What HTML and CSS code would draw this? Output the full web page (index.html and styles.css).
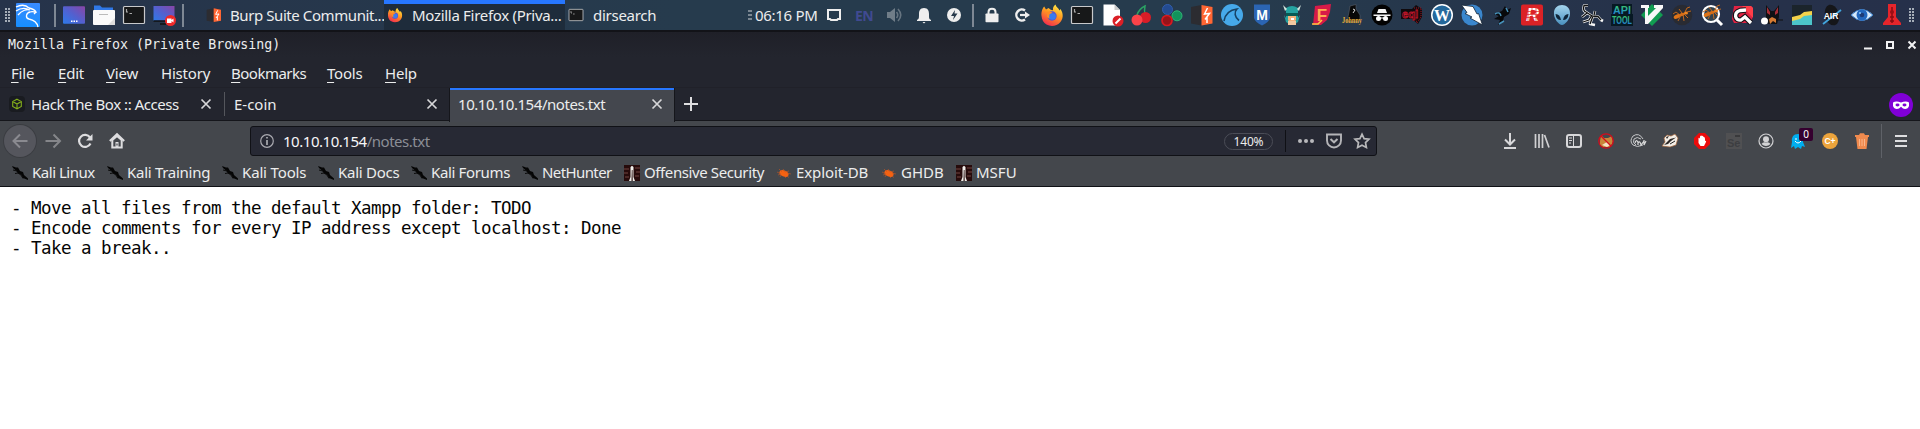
FILE: index.html
```
<!DOCTYPE html>
<html lang="en">
<head>
<meta charset="utf-8">
<title>Mozilla Firefox (Private Browsing)</title>
<link rel="stylesheet" href="styles.css">
</head>
<body>
<svg width="0" height="0" class="defs" aria-hidden="true">
  <defs>
    <linearGradient id="desk" x1="0" y1="1" x2="1" y2="0"><stop offset="0" stop-color="#2d7bea"/><stop offset=".5" stop-color="#5360cf"/><stop offset="1" stop-color="#8a45a5"/></linearGradient>
    <linearGradient id="fire" x1=".8" y1="0" x2=".3" y2="1"><stop offset="0" stop-color="#fff04a"/><stop offset=".45" stop-color="#ff9a20"/><stop offset="1" stop-color="#f32b4f"/></linearGradient>
    <linearGradient id="kali" x1="0" y1="0" x2="0" y2="1"><stop offset="0" stop-color="#3a8bff"/><stop offset="1" stop-color="#168eff"/></linearGradient>
    <linearGradient id="api" x1="0" y1="0" x2="0" y2="1"><stop offset="0" stop-color="#3fc45b"/><stop offset=".5" stop-color="#28a8a8"/><stop offset="1" stop-color="#2366e8"/></linearGradient>
    <linearGradient id="alien" x1="0" y1="0" x2="0" y2="1"><stop offset="0" stop-color="#a4d5ee"/><stop offset="1" stop-color="#4a91bf"/></linearGradient>
    <symbol id="firefox" viewBox="0 0 24 24">
      <path d="M1.500 13C1 8 3 4.800 4.200 3.500L6 6.500L8.500 5C10 6 10.500 7 13 7.200C12.500 4.500 14 2.500 15.500 1.500C16 4 18.500 5 19.500 7.500L20.500 6C24 11 23 16.500 20 19.500C17 23 11 24 6.500 21.500C3.500 19.800 1.800 16.500 1.500 13Z" fill="url(#fire)"/>
      <circle cx="12" cy="13" r="4.700" fill="#5b56c9"/><path d="M7 9.500C9 8 11 8.500 12.500 10L9.500 11.500C11 13 13 12.500 14.500 12C14 15.500 10 17 7 14Z" fill="#ff8a24"/><circle cx="12.500" cy="13.500" r="3.300" fill="#397bf0"/>
    </symbol>
    <symbol id="term" viewBox="0 0 24 24"><rect x="1.500" y="3.500" width="21" height="17" rx="1" fill="#171819" stroke="#c8c9cb" stroke-width="1.200"/><path d="M4.500 6v3h1.500M7.500 10.500H10" stroke="#aaa" fill="none" stroke-width="1.200"/></symbol>
    <symbol id="burp" viewBox="0 0 24 24"><path d="M1 4L11.500 2V22.500L1 20.500Z" fill="#2c2c31"/><path d="M11.500 2L22.500 4V20.500L11.500 22.500Z" fill="#ff6633"/><path d="M17.500 5L14.500 11L19.500 10.500L15 16.500M17 14V20" fill="none" stroke="#fff" stroke-width="1.500"/></symbol>
    <symbol id="dragon" viewBox="0 0 16 16"><path d="M0 1L4 2.500L6 2.500L8 6L11 7L12 10L16 13.500V15L11 13L9 9.500L6 8.500L4 5.500L1 3Z" fill="#050505"/><path d="M1 5L5 6M3 8.500L6 8L9 10L11 13.500" stroke="#0b0b0b" fill="none"/></symbol>
    <symbol id="offsec" viewBox="0 0 16 16"><rect width="16" height="16" fill="#260b0b"/><path d="M0 4H5M0 8H4M1 12H5M11 3H16M12 7H16M11 11H15" stroke="#593331" stroke-width="1.300"/><path d="M5 16L6.500 12V2L8 .8L9.500 2V12L11 16H8.700L8.500 5H7.800L7.500 16Z" fill="#f1efeb"/></symbol>
    <symbol id="bug" viewBox="0 0 16 16"><ellipse cx="8" cy="8.500" rx="4.800" ry="3" transform="rotate(24 8 8.500)" fill="#f46212"/><path d="M1 7L5 9L2 10M3 4L6 7M7 4L9 7L13 6M5 10L4 12M8 11L10 13M11 11L13 12.500M11 8L15 9" stroke="#c75722" fill="none" stroke-width=".6"/></symbol>
    <symbol id="ant" viewBox="0 0 24 24"><ellipse cx="7" cy="13.500" rx="3.500" ry="2" fill="#df7418" transform="rotate(-25 7 13.500)"/><ellipse cx="12" cy="11.500" rx="3" ry="1.500" fill="#d56d17" transform="rotate(-20 12 11.500)"/><ellipse cx="16" cy="10" rx="2" ry="1.500" fill="#ef8521"/><path d="M10 12L6 9L3 11M11 12L8 18M13 11L14 18M14 11L18 15M15 9L17 5L20 4M17 9L21 8M12 10L9 6" fill="none" stroke="#d06d1b" stroke-width=".9"/></symbol>
    <symbol id="close" viewBox="0 0 12 12"><path d="M1.500 1.500L10.500 10.500M10.500 1.500L1.500 10.500" stroke="#d6d6d8" stroke-width="1.700"/></symbol>
  </defs>
</svg>

<header class="panel">
  <span class="grip"></span>
  <svg class="kali" viewBox="0 0 24 24"><rect width="24" height="24" rx="1" fill="url(#kali)"/><path d="M0 4C6 1 10 2 13 5M0 8C6 4 10 5 14 7M2 12C6 7 11 6 14 7M13 5C17 6 19 7 20 9C18 9 16 8 14 9C10 10 9 15 13 16C18 17 21 19 22 24M20 9L18 11" fill="none" stroke="#fff" stroke-width="1.300"/></svg>
  <i class="sep sep-first"></i>
  <div class="cell"><svg viewBox="0 0 24 24"><rect x="1" y="3.300" width="22" height="17.500" rx="1" fill="url(#desk)"/><path d="M9 18.200h1.500M11.500 18.200h1.500M14 18.200h1.500" stroke="#fff" stroke-width="1.600"/></svg></div>
  <div class="cell"><svg viewBox="0 0 24 24"><path d="M2 2.500H8L10 4.500H21V10H2Z" fill="#2f78e7"/><rect x="1" y="7" width="22" height="15" rx="1" fill="#fafafa"/><path d="M16 22L23 15V22Z" fill="#dcdcdc"/><path d="M7 11.500H16" stroke="#bbb"/></svg></div>
  <div class="cell"><svg><use href="#term"/></svg></div>
  <div class="cell"><svg viewBox="0 0 24 24"><rect x="1.500" y="3" width="21" height="15" fill="url(#desk)"/><path d="M1.500 18H22M8 21H14" stroke="#111" stroke-width="1.500"/><circle cx="18.500" cy="17.500" r="5.500" fill="#ef2929"/><path d="M15 15.500H19.500V17L21.500 15.500V19.500L19.500 18V20H15Z" fill="#fff"/></svg></div>
  <i class="sep"></i>
  <div class="task task-burp"><svg><use href="#burp"/></svg><span>Burp Suite Communit...</span></div>
  <div class="task task-active"><svg><use href="#firefox"/></svg><span>Mozilla Firefox (Priva...</span></div>
  <div class="task task-dir"><svg><use href="#term"/></svg><span>dirsearch</span></div>
  <div class="tray">
    <span class="minigrip"></span><span class="clock">06:16 PM</span>
    <div class="cell"><svg viewBox="0 0 24 24"><path d="M6 7H18V16H16L15 17H9L8 16H6Z" fill="none" stroke="#eee" stroke-width="2"/></svg></div>
    <div class="cell lang">EN</div>
    <div class="cell"><svg viewBox="0 0 24 24"><path d="M5 9H8L13 5V19L8 15H5Z" fill="#707d88"/><path d="M14.500 9Q17 12 14.500 15M16 6Q21.500 12 16 18" fill="none" stroke="#667480" stroke-width="1.600"/></svg></div>
    <div class="cell"><svg viewBox="0 0 24 24"><path d="M12 5C16 5 17 8 17 11C17 15 17 16 19 17V18H5V17C7 16 7 15 7 11C7 8 8 5 12 5ZM10.500 19H13.500L12 20.500Z" fill="#eee"/></svg></div>
    <div class="cell"><svg viewBox="0 0 24 24"><circle cx="12" cy="12" r="7" fill="#eee"/><path d="M13 7L9 13H12L11 17L15.500 10.500H12.500Z" fill="#26384a"/></svg></div>
    <i class="sep"></i>
    <div class="cell"><svg viewBox="0 0 24 24"><path d="M8.500 12V9C8.500 4.500 15.500 4.500 15.500 9V12" fill="none" stroke="#eee" stroke-width="2"/><rect x="5.500" y="10.500" width="13" height="8.800" rx=".8" fill="#eee"/></svg></div>
    <div class="cell"><svg viewBox="0 0 24 24"><path d="M15 7.500A5.500 5.500 0 1 0 15 16.500" fill="none" stroke="#eee" stroke-width="2.400"/><path d="M10 12H17" stroke="#eee" stroke-width="2.200"/><path d="M15 8.500L20 12L15 15.500Z" fill="#eee"/></svg></div>
    <div class="cell"><svg><use href="#firefox"/></svg></div>
    <div class="cell"><svg><use href="#term"/></svg></div>
    <div class="cell"><svg viewBox="0 0 24 24"><path d="M3.500 1.500H14.500L20 7V22.500H3.500Z" fill="#fff"/><path d="M14.500 1.500V7H20Z" fill="#ccc"/><circle cx="18" cy="18" r="5.500" fill="#db1f26"/><path d="M15.500 20.500L20.500 15.500" stroke="#fff" stroke-width="2"/></svg></div>
    <div class="cell"><svg viewBox="0 0 24 24"><path d="M7 12Q9 6 15 3Q14 8 15 11" fill="none" stroke="#2ba263" stroke-width="1.500"/><circle cx="15.500" cy="14.500" r="5.500" fill="#d91d27"/><circle cx="7" cy="17" r="5.500" fill="#fb4349"/></svg></div>
    <div class="cell"><svg viewBox="0 0 24 24"><circle cx="7.500" cy="6.500" r="5" fill="#234b91" stroke="#315dab"/><circle cx="17" cy="12.800" r="5" fill="#12935c" stroke="#30b477"/><circle cx="7" cy="17.500" r="5" fill="#971319" stroke="#d71920" stroke-width="1.700"/></svg></div>
    <div class="cell"><svg><use href="#burp"/></svg></div>
    <div class="cell"><svg viewBox="0 0 24 24"><circle cx="12" cy="12" r="11" fill="#46a9ea"/><path d="M4 18C5 12 9 7 17 6C14 9 14.500 14 19 17.500" fill="none" stroke="#174265" stroke-width="1.600"/></svg></div>
    <div class="cell"><svg viewBox="0 0 24 24"><path d="M4 1.500H20V15Q19 19 12 22.500Q5 19 4 15Z" fill="#2b65b3"/><text x="12" y="16.500" text-anchor="middle" class="glyph msf">M</text></svg></div>
    <div class="cell"><svg viewBox="0 0 24 24"><path d="M6 5Q12 1 18 5V15L20 12L18 19L15 21H9L6 19L4 12L6 15Z" fill="#25a3a1"/><path d="M7 6L3 2L5 8ZM17 6L21 2L19 8Z" fill="#d6e8df"/><path d="M8 13H16V17L14 20H10L8 17Z" fill="#f4b37c"/><path d="M6 10H18V13H6Z" fill="#075b55"/><path d="M8 18H16V22H8Z" fill="#f2c9a0"/><path d="M11 15H14V17H11Z" fill="#fff"/></svg></div>
    <div class="cell"><svg viewBox="0 0 24 24"><path d="M5 3L21 1L20 9L17 17L11 22H3Z" fill="#d71a48"/><path d="M2 21H8L12 17" stroke="#ffc940" stroke-width="1.500" fill="none"/><text x="12" y="18" text-anchor="middle" class="glyph fara">F</text></svg></div>
    <div class="cell"><svg viewBox="0 0 24 24"><path d="M10 3L16 1.500L16 6L20 12V18H7L9 9Z" fill="#080808" stroke="#59606b" stroke-width=".6"/><path d="M13 6L15 7L13 10" stroke="#ddd" fill="none"/><text x="12" y="20" text-anchor="middle" textLength="20" lengthAdjust="spacingAndGlyphs" class="glyph john">Johnny</text></svg></div>
    <div class="cell"><svg viewBox="0 0 24 24"><circle cx="12" cy="12" r="10.500" fill="#030303"/><path d="M3.500 11.500H20.500V13H3.500ZM7 10L8.500 6H15.500L17 10Z" fill="#f4f4f4"/><circle cx="8.500" cy="15.500" r="2.500" fill="#fff"/><circle cx="15.500" cy="15.500" r="2.500" fill="#fff"/><path d="M10 15H14" stroke="#fff"/></svg></div>
    <div class="cell"><svg viewBox="0 0 24 24"><path d="M1 6H12L16 2L22 6V14L18 21L12 16H1Z" fill="#100a0d"/><text x="10" y="14.500" text-anchor="middle" class="glyph eql">eql</text><path d="M14 5H21V14L17 20L15 14" stroke="#9d1422" stroke-dasharray="1 1" fill="none"/></svg></div>
    <div class="cell"><svg viewBox="0 0 24 24"><circle cx="12" cy="12" r="11" fill="#fff"/><circle cx="12" cy="12" r="9.500" fill="#24689b"/><text x="12" y="17.500" text-anchor="middle" class="glyph wp">W</text></svg></div>
    <div class="cell"><svg viewBox="0 0 24 24"><circle cx="12" cy="12" r="10.500" fill="#3a87ce"/><path d="M1.500 2L13 3.500L17 11L18.500 10.500L22.500 22L10 15L12 14L5 10.500L7 9.500Z" fill="#fff" stroke="#102131" stroke-width=".8"/></svg></div>
    <div class="cell"><svg viewBox="0 0 24 24"><path d="M4 11L12 8L15 3L17 7L21 5L19 11L14 14L13 18L8 22L10 17L4 16L9 13Z" fill="#08090b"/><path d="M5 11Q10 8 11 13M16 5L18 9M9 21L14 18" stroke="#4793bb" fill="none" stroke-width="1.500"/></svg></div>
    <div class="cell"><svg viewBox="0 0 24 24"><rect x="1" y="1.500" width="22" height="21" rx="2" fill="#db2226"/><text x="12.500" y="18" text-anchor="middle" class="glyph rr">R</text><path d="M3 8.500H21M3 11.500H21M3 14.500H21M8 4V20M12 4V20M16 4V20" stroke="#db2226" stroke-width=".7"/></svg></div>
    <div class="cell"><svg viewBox="0 0 24 24"><path d="M4 11C3 -1 21 -1 20 11C20 16 15 22 12 22C9 22 4 16 4 11Z" fill="url(#alien)"/><path d="M5.500 11Q10 11 11 17Q6 17 5.500 11ZM18.500 11Q14 11 13 17Q18 17 18.500 11Z" fill="#10263a"/></svg></div>
    <div class="cell"><svg viewBox="0 0 24 24"><g fill="none" stroke-linejoin="round"><path id="scorp" d="M8 2.500L4 2.500Q2.500 8 6 9L12 13L18 13.500L21 17L23 18M12 12L9 17L3 19M13 13L10 21L15 22M7 10L2 14M15 8L14 12" stroke="#f7f7f7" stroke-width="2.600"/><path d="M8 2.500L4 2.500Q2.500 8 6 9L12 13L18 13.500L21 17M12 12L9 17L3 19M13 13L10 21M7 10L2 14M15 8L14 12" stroke="#111" stroke-width="1.300"/></g></svg></div>
    <div class="cell"><svg viewBox="0 0 24 24"><path d="M2 1H22V11H23V23H1V11H2Z" fill="#071923"/><text x="12" y="10.500" text-anchor="middle" textLength="18" lengthAdjust="spacingAndGlyphs" class="glyph api">API</text><text x="12" y="21" text-anchor="middle" textLength="20" lengthAdjust="spacingAndGlyphs" class="glyph api">TOOL</text></svg></div>
    <div class="cell"><svg viewBox="0 0 24 24"><path d="M12 1L23 12L12 23L1 12Z" fill="#119c51"/><path d="M1 2H9V5H8V13L16 5H14V2H23V5L8 21H5V5H1Z" fill="#f8f8f8"/></svg></div>
    <div class="cell"><svg viewBox="0 0 24 24"><circle cx="12" cy="12" r="10.300" fill="#292b32"/><use href="#ant"/></svg></div>
    <div class="cell"><svg viewBox="0 0 24 24"><circle cx="11" cy="11" r="8" fill="#33434e" stroke="#fff" stroke-width="2.200"/><path d="M17 17L22 22" stroke="#fff" stroke-width="3"/><use href="#ant" y="-2"/></svg></div>
    <div class="cell"><svg viewBox="0 0 24 24"><path d="M4 3H21L23 5L22 18L17 20H4L2 16Z" fill="#df2343"/><path d="M12 3H21L23 5V15Z" fill="#ff3e49"/><path d="M16 7L10 7.500C3 10 5 18 11 17L15 14L21 20" fill="none" stroke="#151015" stroke-width="5.500"/><path d="M16 7L10 7.500C3 10 5 18 11 17L15 14L21 20" fill="none" stroke="#fff" stroke-width="3.300"/></svg></div>
    <div class="cell"><svg viewBox="0 0 24 24"><path d="M6 2L11 8H14L19 2V14L17 21H8L6 14Z" fill="#101114"/><path d="M7 4L10 9V12L7 10ZM18 4L15 9V12L18 10Z" fill="#a92d37"/><path d="M9 16L12 14L16 16V20L13 18L10 21Z" fill="#d57a32"/><path d="M18 17H23" stroke="#111"/><circle cx="4.500" cy="18" r="3.500" fill="#fff"/></svg></div>
    <div class="cell"><svg viewBox="0 0 24 24"><rect x="2" y="2" width="20" height="20" fill="#1b242b"/><path d="M2 14L10 12L14 9L22 8V13L12 17L2 20Z" fill="#f4d24a"/><path d="M2 18L10 16L14 13L22 12V22H2Z" fill="#4cc5ca"/></svg></div>
    <div class="cell"><svg viewBox="0 0 24 24"><ellipse cx="12" cy="12" rx="7" ry="10.500" transform="rotate(-15 12 12)" fill="#151619"/><path d="M3 21L21 7" stroke="#42a6de" stroke-width="1.800"/><text x="11" y="16" text-anchor="middle" class="glyph air">AIR</text></svg></div>
    <div class="cell"><svg viewBox="0 0 24 24"><path d="M1 12Q12 1 23 12Q12 23 1 12Z" fill="#d7e9fa" stroke="#377dc9"/><circle cx="12" cy="12" r="5.500" fill="#2367bd"/><circle cx="12" cy="12" r="2.300" fill="#1e3b75"/><circle cx="10" cy="10" r="1" fill="#8bc8fa"/></svg></div>
    <div class="cell"><svg viewBox="0 0 24 24"><path d="M8 1H16V14L21 20V22H3V20L8 14Z" fill="#e5252b"/><path d="M12 4V20M10 14H14M10 18H14" stroke="#8a0b12" stroke-width="1.500"/><circle cx="12" cy="9" r="2" fill="#9c0e15"/></svg></div>
    <span class="grip grip-end"></span>
  </div>
</header>

<div class="titlebar">
  <span class="title">Mozilla Firefox (Private Browsing)</span>
  <svg class="winbtns" viewBox="0 0 56 12"><path d="M2 9.500H10" stroke="#f2f2f3" stroke-width="2"/><rect x="25" y="3" width="6" height="6" fill="none" stroke="#f2f2f3" stroke-width="2"/><path d="M46.500 2.500L53.500 9.500M53.500 2.500L46.500 9.500" stroke="#f2f2f3" stroke-width="2"/></svg>
</div>

<nav class="menubar">
  <span class="m-file"><u>F</u>ile</span><span class="m-edit"><u>E</u>dit</span><span class="m-view"><u>V</u>iew</span><span class="m-hist">Hi<u>s</u>tory</span><span class="m-book"><u>B</u>ookmarks</span><span class="m-tool"><u>T</u>ools</span><span class="m-help"><u>H</u>elp</span>
</nav>

<div class="tabs">
  <div class="tab tab-htb">
    <svg class="fav" viewBox="0 0 16 16"><rect width="16" height="16" rx="4" fill="#191b20"/><path d="M8 3.200L12.300 5.500V10.500L8 12.800L3.700 10.500V5.500ZM3.700 5.500L8 8L12.300 5.500M8 8V12.500" fill="none" stroke="#83ad1b" stroke-width="1.100"/></svg>
    <span>Hack The Box :: Access</span><svg class="x"><use href="#close"/></svg>
  </div>
  <div class="tab tab-ecoin"><span>E-coin</span><svg class="x"><use href="#close"/></svg></div>
  <div class="tab tab-notes"><span>10.10.10.154/notes.txt</span><svg class="x"><use href="#close"/></svg></div>
  <svg class="plus" viewBox="0 0 14 14"><path d="M7 0V14M0 7H14" stroke="#dedee0" stroke-width="2"/></svg>
  <svg class="mask" viewBox="0 0 24 24"><circle cx="12" cy="12" r="12" fill="#8000d7"/><path d="M4 9.500Q7 7.500 12 9.500Q17 7.500 20 9.500V13Q19 16 16 16Q14 16 12 13.800Q10 16 8 16Q5 16 4 13Z" fill="#fff"/><ellipse cx="8.500" cy="12" rx="2" ry="1.400" fill="#8000d7"/><ellipse cx="15.500" cy="12" rx="2" ry="1.400" fill="#8000d7"/></svg>
</div>

<div class="toolbar">
  <div class="back"><svg viewBox="0 0 16 16"><path d="M15.500 8H1.500M8 1.500L1.500 8L8 14.500" fill="none" stroke="#8a8a90" stroke-width="2"/></svg></div>
  <svg class="i16 fwd" viewBox="0 0 16 16"><path d="M.5 8H14.500M8.500 1.500L15 8L8.500 14.500" fill="none" stroke="#85868a" stroke-width="2"/></svg>
  <svg class="i16 reload" viewBox="0 0 16 16"><path d="M13 4.500A6 6 0 1 0 13.500 10.500" fill="none" stroke="#dddddf" stroke-width="2.200"/><path d="M15.500 1V7.500H9Z" fill="#dddddf"/></svg>
  <svg class="i16 home" viewBox="0 0 16 16"><path d="M.8 8L8 1.200L15.200 8" fill="none" stroke="#dddddf" stroke-width="2"/><path d="M3.300 7V14.500H12.700V7L8 3Z" fill="none" stroke="#dddddf" stroke-width="2"/><path d="M6.500 9H9.500V14H6.500Z" fill="#dddddf"/><path d="M8 10.500V12.500" stroke="#44474c" stroke-width="1.200"/></svg>
  <div class="urlbar">
    <svg class="info" viewBox="0 0 14 14"><circle cx="7" cy="7" r="6.300" fill="none" stroke="#aaaab0" stroke-width="1.200"/><path d="M7 3V4.600M7 6V11" stroke="#aaaab0" stroke-width="1.700"/></svg>
    <span class="url">10.10.10.154<em>/notes.txt</em></span>
    <span class="zoom">140%</span><i class="urlsep"></i>
    <svg class="i16 dots" viewBox="0 0 16 16"><g fill="#b8b8bb"><circle cx="2" cy="8" r="2"/><circle cx="8" cy="8" r="2"/><circle cx="14" cy="8" r="2"/></g></svg>
    <svg class="i16 pocket" viewBox="0 0 16 16"><path d="M1 1.500H15V7.500A7 7 0 0 1 1 7.500Z" fill="none" stroke="#b4b4b7" stroke-width="1.900"/><path d="M4.500 6L8 9.300L11.500 6" fill="none" stroke="#b4b4b7" stroke-width="2"/></svg>
    <svg class="i16 star" viewBox="0 0 16 16"><path d="M8 1.200L10.100 5.600L15 6.200L11.500 9.600L12.400 14.500L8 12.200L3.600 14.500L4.500 9.600L1 6.200L5.900 5.600Z" fill="none" stroke="#b8b8ba" stroke-width="1.700"/></svg>
  </div>
  <div class="actions">
    <svg viewBox="0 0 16 16"><path d="M8 0V11M3 6.500L8 11.500L13 6.500" fill="none" stroke="#d8d8da" stroke-width="2"/><path d="M2 15H14" stroke="#d8d8da" stroke-width="2"/></svg>
    <svg viewBox="0 0 16 16"><path d="M1.500 1V15M5 1V15M8.500 1V15M10.500 2L15 14.500" stroke="#d0d0d2" stroke-width="1.700"/></svg>
    <svg viewBox="0 0 16 16"><rect x="1" y="2" width="14" height="12" rx="2" fill="none" stroke="#d8d8da" stroke-width="2"/><path d="M7.500 2V14M3 5H6M3 7.500H6M3 10H5" stroke="#d8d8da"/></svg>
    <svg viewBox="0 0 16 16"><path d="M2 8L3 2L6 5H10L14 3L15 9L12 14H5L2 12Z" fill="#c8863a"/><path d="M4 12L9 9L12 12L9 14Z" fill="#f4e2c2"/><circle cx="8" cy="8" r="7.200" fill="none" stroke="#d60b1b" stroke-width="1.300"/><path d="M3 3L13 13" stroke="#d60b1b" stroke-width="1.300"/></svg>
    <svg viewBox="0 0 16 16"><path d="M13 6Q9 -1 3 3Q-1 8 3 12Q7 15 13 12M11 6Q7 3 4 6Q2 10 6 12" fill="none" stroke="#c5c6c8" stroke-width="1"/><path d="M5 10Q6 6 8 9V12M8 10Q10 7 11 12L14 8M14 7V12L16 8" stroke="#ddd" fill="none" stroke-width="1.200"/></svg>
    <svg viewBox="0 0 16 16"><path d="M2 5L5 2L9 3L13 1L16 5L14 12L8 14L0 13L3 9Z" fill="#f4eee6" stroke="#a06136" stroke-width=".7"/><path d="M2 12L8 6L14 4.500L9 8L6 11ZM4 4L7 3L5 6Z" fill="#2c2827"/><path d="M8 11L13 8" stroke="#222"/></svg>
    <svg viewBox="0 0 16 16"><path d="M5 0H11L16 5V11L11 16H5L0 11V5Z" fill="#eb0b0b"/><path d="M4.500 8V5Q5.500 4 6 6V3.500Q7 2 8 3Q9 2 9.500 4Q11 3.500 11 6V8Q12.500 7 12 9L10 13H6.500L4.500 10Z" fill="#fff"/></svg>
    <svg viewBox="0 0 16 16"><rect width="16" height="16" fill="#505052"/><text x="1" y="14" class="glyph se">Se</text><path d="M9 3H14" stroke="#39393b" stroke-width="2"/></svg>
    <svg viewBox="0 0 16 16"><circle cx="8" cy="8" r="7" fill="none" stroke="#d2d2d4" stroke-width="1.200"/><circle cx="8" cy="6.300" r="3" fill="#d2d2d4"/><path d="M3.500 11Q5 8.500 8 9.500Q11 8.500 12.500 11Q8 15 3.500 11Z" fill="#d2d2d4"/></svg>
    <div class="ghost"><svg viewBox="0 0 16 16"><path d="M2 9Q1 1 8 1Q14 1 13 9L15 14L12 13L11 16L8 14L5 16L4 13L1 15Z" fill="#00aef0"/><path d="M6 5V7M10 5V7M5 8Q8 12 11 8" stroke="#fff" fill="none"/></svg><b>0</b></div>
    <svg viewBox="0 0 16 16"><circle cx="8" cy="8" r="8" fill="#eca43c"/><text x="8" y="11.200" text-anchor="middle" class="glyph cplus">C+</text></svg>
    <svg viewBox="0 0 16 16"><path d="M1 2H5L6 .3H10L11 2H15V4H1ZM2 4H14L12.500 16H3.500Z" fill="#f08a4e"/><path d="M5.500 6V13M8 6V13M10.500 6V13" stroke="#f9b58b"/></svg>
  </div>
  <i class="menusep"></i>
  <svg class="burger" viewBox="0 0 12 12"><path d="M0 1H12M0 6H12M0 11H12" stroke="#dedee0" stroke-width="2"/></svg>
</div>

<div class="bookmarks">
  <a class="k1"><svg><use href="#dragon"/></svg><span>Kali Linux</span></a>
  <a class="k2"><svg><use href="#dragon"/></svg><span>Kali Training</span></a>
  <a class="k3"><svg><use href="#dragon"/></svg><span>Kali Tools</span></a>
  <a class="k4"><svg><use href="#dragon"/></svg><span>Kali Docs</span></a>
  <a class="k5"><svg><use href="#dragon"/></svg><span>Kali Forums</span></a>
  <a class="k6"><svg><use href="#dragon"/></svg><span>NetHunter</span></a>
  <a class="k7"><svg><use href="#offsec"/></svg><span>Offensive Security</span></a>
  <a class="k8"><svg><use href="#bug"/></svg><span>Exploit-DB</span></a>
  <a class="k9"><svg><use href="#bug"/></svg><span>GHDB</span></a>
  <a class="k10"><svg><use href="#offsec"/></svg><span>MSFU</span></a>
</div>

<pre class="page">- Move all files from the default Xampp folder: TODO
- Encode comments for every IP address except localhost: Done
- Take a break..</pre>
</body>
</html>
```
FILE: styles.css
```
* { box-sizing: border-box; }
body { margin: 0; width: 1920px; height: 429px; overflow: hidden; background: #fff; color: #eceded; font: 15px/20px "Noto Sans", "Open Sans", sans-serif; }
.defs { position: absolute; }
svg { display: block; flex: none; overflow: visible; }
span { white-space: nowrap; }

/* Desktop panel */
.panel { height: 32px; padding-left: 5px; display: flex; align-items: center; border-bottom: 2px solid #121318; background: linear-gradient(90deg, #26334a 0, #263b4d 35%, #263b4d 65%, #26324a 85%, #26304a 100%); }
.panel > *, .tray > * { flex: none; }
.grip { width: 5px; height: 15px; background: repeating-linear-gradient(0deg, transparent 0 1px, #a5adb8 1px 3px); -webkit-mask: repeating-linear-gradient(90deg, #000 0 2px, transparent 2px 3px); mask: repeating-linear-gradient(90deg, #000 0 2px, transparent 2px 3px); }
.kali { width: 24px; height: 24px; margin-left: 6px; }
.cell { width: 30px; height: 30px; display: flex; align-items: center; justify-content: center; }
.cell svg { width: 24px; height: 24px; }
.sep { width: 8px; height: 23px; background: linear-gradient(90deg, transparent 3px, #7e8894 3px 5px, transparent 5px); }
.sep-first { margin-left: 11px; }
.task { height: 30px; display: flex; align-items: center; }
.task svg { width: 16px; height: 16px; }
.task-burp { width: 197px; padding-left: 19px; }
.task-burp span { margin-left: 8px; letter-spacing: -.42px; }
.task-active { width: 181px; padding-left: 3px; border-top: 4px solid #2777ff; background: #1e2c3b; }
.task-active svg { margin-top: -4px; }
.task-active span { margin: -4px 0 0 9px; letter-spacing: -.3px; }
.task-dir { width: 183px; padding-left: 3px; }
.task-dir span { margin-left: 9px; letter-spacing: -.27px; }
.tray { display: flex; align-items: center; }
.minigrip { width: 4px; height: 10px; background: repeating-linear-gradient(0deg, #7b8792 0 2px, transparent 2px 4px); }
.clock { width: 67px; padding-left: 3px; letter-spacing: -.3px; }
.lang { color: #404a91; font: bold 14px "Noto Sans", sans-serif; letter-spacing: -.5px; }
.grip-end { margin-left: 2px; }

/* Text inside icons */
.glyph { font-family: "Liberation Sans", sans-serif; font-weight: bold; fill: #fff; }
.msf { font-size: 14px; }
.fara { font-size: 17px; fill: #ffac50; }
.john { font: bold 9px "Liberation Serif", serif; fill: #e6ae3a; }
.eql { font-size: 11px; fill: none; stroke: #c4162b; stroke-width: .8px; }
.wp { font: bold 16px "Liberation Serif", serif; }
.rr { font-size: 18px; font-style: italic; }
.api { font-size: 10px; fill: url(#api); }
.air { font-size: 8.500px; }
.se { font-size: 11px; fill: #3d3e41; }
.cplus { font-size: 8.500px; }

/* Window frame */
.titlebar { height: 25px; padding: 0 3px 0 8px; display: flex; align-items: center; justify-content: space-between; background: linear-gradient(#1f2028, #23252e); }
.title { font: 13.300px/24px "DejaVu Sans Mono", monospace; }
.winbtns { width: 56px; height: 12px; margin-right: -1px; }
.menubar { height: 30px; padding: 6px 0 0 11px; display: flex; background: #23252e; letter-spacing: -.2px; }
.menubar span { flex: none; }
.menubar u { text-underline-offset: 3px; text-decoration-thickness: 1px; }
.m-file { width: 47px; }
.m-edit { width: 48px; }
.m-view { width: 55px; }
.m-hist { width: 70px; }
.m-book { width: 96px; letter-spacing: -.5px; }
.m-tool { width: 58px; }

.tabs { height: 34px; padding-top: 1px; display: flex; background: #23252e; border-top: 1px solid #202129; border-bottom: 1px solid #15161b; }
.tab { display: flex; align-items: center; height: 32px; padding-bottom: 2px; }
.tab .x { width: 12px; height: 12px; margin-left: auto; }
.tab-htb { width: 225px; padding: 0 12px 0 9px; border-right: 1px solid #54565c; height: 24px; margin-top: 3px; letter-spacing: -.45px; }
.fav { width: 16px; height: 16px; margin-right: 6px; }
.tab-ecoin { width: 224px; padding: 0 11px 2px 9px; }
.tab-notes { width: 226px; height: 33px; margin: -1px 0 -1px; padding: 0 11px 0 8px; background: #44474e; border: 1px solid #15161b; border-width: 0 1px; box-shadow: inset 0 2px #2777ff; letter-spacing: -.45px; }
.tab-notes { height: 34px; padding-bottom: 2px; }
.plus { width: 14px; height: 14px; margin: 8px 0 0 9px; }
.mask { width: 24px; height: 24px; margin: 4px 7px 0 auto; }

/* Navigation */
.toolbar { height: 40px; padding-left: 4px; display: flex; align-items: center; background: #44474c; }
.back { width: 32px; height: 32px; border-radius: 50%; background: #55565d; box-shadow: 0 0 0 1px #3b3d42; display: flex; align-items: center; justify-content: center; }
.back svg, .i16 { width: 16px; height: 16px; }
.fwd { margin-left: 9px; }
.reload { margin-left: 16px; }
.home { margin-left: 16px; }
.urlbar { width: 1127px; height: 30px; margin-left: 125px; padding-left: 9px; display: flex; align-items: center; background: #272934; border: 1px solid #101116; border-radius: 3px; }
.info { width: 14px; height: 14px; margin-right: 9px; }
.url { flex: 1; color: #f7f7f8; letter-spacing: -.47px; }
.url em { font-style: normal; color: #8b8e96; }
.zoom { width: 49px; height: 17px; border: 1px solid #4b4d57; border-radius: 9px; text-align: center; font-size: 12px; line-height: 15px; letter-spacing: -.2px; }
.urlsep { width: 1px; height: 22px; background: #0f1015; margin: 0 12px; }
.pocket { margin-left: 12px; }
.star { margin: 0 6px 0 12px; }
.actions { display: flex; gap: 16px; margin-left: 125px; }
.actions svg { width: 16px; height: 16px; }
.ghost { position: relative; width: 16px; }
.ghost b { position: absolute; left: 9px; top: -5px; width: 14px; height: 13px; border-radius: 2px; background: #35002f; color: #fff; font: 10px/12px "Noto Sans", sans-serif; text-align: center; }
.menusep { width: 1px; height: 34px; margin-left: 11px; background: #5f6268; }
.burger { width: 12px; height: 12px; margin-left: 13px; }

.bookmarks { height: 26px; padding: 0 0 4px 12px; display: flex; align-items: center; background: #44474c; border-bottom: 1px solid #101116; }
.bookmarks a { display: flex; align-items: center; flex: none; }
.bookmarks svg { width: 16px; height: 16px; margin: 2px 4px 0 0; }
.k1 { width: 95px; letter-spacing: -.48px; }
.k2 { width: 115px; letter-spacing: -.28px; }
.k3 { width: 96px; letter-spacing: -.15px; }
.k4 { width: 93px; letter-spacing: -.25px; }
.k5 { width: 111px; letter-spacing: -.35px; }
.k6 { width: 102px; letter-spacing: -.6px; }
.k7 { width: 152px; letter-spacing: -.4px; }
.k8 { width: 105px; letter-spacing: -.1px; }
.k9 { width: 75px; }

.page { margin: 0; padding: 11px 11px; color: #050505; font: 17.500px/20px "DejaVu Sans Mono", monospace; letter-spacing: -.535px; }
```
